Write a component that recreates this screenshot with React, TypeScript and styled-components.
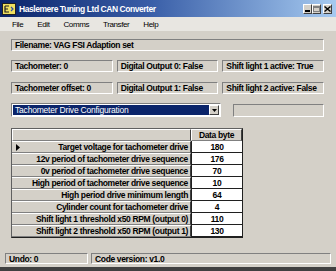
import { Fragment } from "react";
import styled, { createGlobalStyle } from "styled-components";

const GlobalStyle = createGlobalStyle`
  html, body {
    margin: 0;
    padding: 0;
    background: #d4d0c8;
  }
  * {
    box-sizing: border-box;
  }
`;

const FONT = `"Liberation Sans", Arial, sans-serif`;

const Window = styled.div`
  width: 336px;
  height: 271px;
  background: #d4d0c8;
  display: flex;
  flex-direction: column;
  font-family: ${FONT};
  font-size: 8.5px;
  letter-spacing: -0.35px;
  color: #000;
  border-bottom: 4px solid #404040;
  overflow: hidden;
`;

const TitleBar = styled.div`
  height: 17px;
  display: flex;
  align-items: center;
  padding: 0 4px 0 2px;
  background: linear-gradient(90deg, #0a246a 0%, #3a5fa8 45%, #a6caf0 100%);
`;

const TitleText = styled.span`
  flex: 1;
  margin-left: 3px;
  color: #fff;
  font-weight: bold;
  font-size: 8.5px;
  letter-spacing: -0.45px;
`;

const CaptionButton = styled.div<{ $gapLeft?: number }>`
  width: 9px;
  height: 10px;
  margin-left: ${({ $gapLeft }) => $gapLeft ?? 0}px;
  background: #d4d0c8;
  border-top: 1px solid #fff;
  border-left: 1px solid #fff;
  border-right: 1px solid #404040;
  border-bottom: 1px solid #404040;
  display: flex;
  align-items: center;
  justify-content: center;
`;

const MenuBar = styled.div`
  height: 14px;
  display: flex;
  align-items: center;
  padding-left: 12px;
  gap: 14px;
  background: #e8e6e1;
  font-size: 8px;
  letter-spacing: -0.4px;
`;

const MenuItem = styled.span``;

const Content = styled.div`
  display: flex;
  flex-direction: column;
  padding: 8px 12px 0 11px;
`;

const Sunken = styled.div<{ $width?: number; $height?: number }>`
  height: ${({ $height }) => $height ?? 12}px;
  ${({ $width }) => ($width ? `width: ${$width}px;` : "flex: 1;")}
  min-width: 0;
  border-top: 1px solid #808080;
  border-left: 1px solid #808080;
  border-right: 1px solid #fff;
  border-bottom: 1px solid #fff;
  display: flex;
  align-items: center;
  padding-left: 3px;
  font-weight: bold;
  white-space: nowrap;
  overflow: hidden;
`;

const Row = styled.div<{ $top: number }>`
  display: flex;
  gap: 4px;
  margin-top: ${({ $top }) => $top}px;
`;

const ComboRow = styled.div`
  display: flex;
  align-items: center;
  margin-top: 9px;
  gap: 12px;
`;

const Combo = styled.div`
  width: 210px;
  height: 14px;
  display: flex;
  background: #fff;
  border-top: 1px solid #808080;
  border-left: 1px solid #808080;
  border-right: 1px solid #fff;
  border-bottom: 1px solid #fff;
  padding: 1px;
`;

const ComboValue = styled.div`
  flex: 1;
  background: #0a246a;
  color: #fff;
  padding-left: 2px;
  display: flex;
  align-items: center;
  letter-spacing: -0.2px;
`;

const ComboArrow = styled.div`
  width: 10px;
  background: #d4d0c8;
  border-top: 1px solid #fff;
  border-left: 1px solid #fff;
  border-right: 1px solid #404040;
  border-bottom: 1px solid #404040;
  display: flex;
  align-items: center;
  justify-content: center;
`;

const Grid = styled.div`
  margin-top: 11px;
  display: grid;
  grid-template-columns: 179px 51px;
  grid-auto-rows: 12px;
  width: 232px;
  border-top: 1px solid #606060;
  border-left: 1px solid #606060;
  border-right: 1px solid #202020;
  border-bottom: 1px solid #202020;
  font-weight: bold;
`;

const HeadCell = styled.div`
  background: #d4d0c8;
  border-top: 1px solid #fff;
  border-left: 1px solid #fff;
  border-right: 1px solid #404040;
  border-bottom: 1px solid #808080;
  display: flex;
  align-items: center;
  justify-content: center;
`;

const LabelCell = styled.div`
  background: #d4d0c8;
  border-top: 1px solid #fff;
  border-right: 1px solid #404040;
  border-bottom: 1px solid #808080;
  display: flex;
  align-items: center;
  padding: 0 2px 0 4px;
  white-space: nowrap;
  overflow: hidden;
`;

const Pointer = styled.span`
  width: 8px;
  display: flex;
  align-items: center;
`;

const LabelText = styled.span`
  flex: 1;
  text-align: right;
`;

const DataCell = styled.div`
  background: #fff;
  border-bottom: 1px solid #202020;
  border-left: 1px solid #202020;
  display: flex;
  align-items: center;
  justify-content: center;
`;

const StatusBar = styled.div`
  display: flex;
  gap: 3px;
  margin-top: auto;
  padding: 0 5px 3px 5px;
`;

const rows: [string, number][] = [
  ["Target voltage for tachometer drive", 180],
  ["12v period of tachometer drive sequence", 176],
  ["0v period of tachometer drive sequence", 70],
  ["High period of tachometer drive sequence", 10],
  ["High period drive minimum length", 64],
  ["Cylinder count for tachometer drive", 4],
  ["Shift light 1 threshold x50 RPM (output 0)", 110],
  ["Shift light 2 threshold x50 RPM (output 1)", 130],
];

function AppIcon() {
  return (
    <svg width="14" height="12" viewBox="0 0 14 12">
      <rect x="0.5" y="0.5" width="13" height="11" fill="#f0e060" stroke="#202020" />
      <path d="M3 3h4M3 3v6h4M3 6h3" stroke="#202020" strokeWidth="1.2" fill="none" />
      <path d="M9 4l2 2-2 2" stroke="#3050a0" strokeWidth="1.2" fill="none" />
    </svg>
  );
}

export default function App() {
  return (
    <>
      <GlobalStyle />
      <Window>
        <TitleBar>
          <AppIcon />
          <TitleText>Haslemere Tuning Ltd CAN Converter</TitleText>
          <CaptionButton>
            <svg width="6" height="6" viewBox="0 0 6 6">
              <rect x="0" y="4" width="5" height="2" fill="#000" />
            </svg>
          </CaptionButton>
          <CaptionButton>
            <svg width="7" height="6" viewBox="0 0 7 6">
              <rect x="0.5" y="0.5" width="6" height="5" fill="none" stroke="#808080" />
              <rect x="0" y="0" width="7" height="2" fill="#808080" />
            </svg>
          </CaptionButton>
          <CaptionButton $gapLeft={2}>
            <svg width="7" height="6" viewBox="0 0 7 6">
              <path d="M0.5 0.5l6 5M6.5 0.5l-6 5" stroke="#000" strokeWidth="1.4" />
            </svg>
          </CaptionButton>
        </TitleBar>
        <MenuBar>
          <MenuItem>File</MenuItem>
          <MenuItem>Edit</MenuItem>
          <MenuItem>Comms</MenuItem>
          <MenuItem>Transfer</MenuItem>
          <MenuItem>Help</MenuItem>
        </MenuBar>
        <Content>
          <Sunken $height={14}>Filename: VAG FSI Adaption set</Sunken>
          <Row $top={9}>
            <Sunken>Tachometer: 0</Sunken>
            <Sunken>Digital Output 0: False</Sunken>
            <Sunken>Shift light 1 active: True</Sunken>
          </Row>
          <Row $top={10}>
            <Sunken>Tachometer offset: 0</Sunken>
            <Sunken>Digital Output 1: False</Sunken>
            <Sunken>Shift light 2 active: False</Sunken>
          </Row>
          <ComboRow>
            <Combo>
              <ComboValue>Tachometer Drive Configuration</ComboValue>
              <ComboArrow>
                <svg width="5" height="3" viewBox="0 0 5 3">
                  <path d="M0 0h5L2.5 3z" fill="#000" />
                </svg>
              </ComboArrow>
            </Combo>
            <Sunken $height={13} />
          </ComboRow>
          <Grid>
            <HeadCell />
            <HeadCell>Data byte</HeadCell>
            {rows.map(([label, value], i) => (
              <Fragment key={label}>
                <LabelCell>
                  <Pointer>
                    {i === 0 && (
                      <svg width="4" height="7" viewBox="0 0 4 7">
                        <path d="M0 0l4 3.5L0 7z" fill="#000" />
                      </svg>
                    )}
                  </Pointer>
                  <LabelText>{label}</LabelText>
                </LabelCell>
                <DataCell>{value}</DataCell>
              </Fragment>
            ))}
          </Grid>
        </Content>
        <StatusBar>
          <Sunken $width={83} $height={11}>Undo: 0</Sunken>
          <Sunken $height={11}>Code version: v1.0</Sunken>
        </StatusBar>
      </Window>
    </>
  );
}
